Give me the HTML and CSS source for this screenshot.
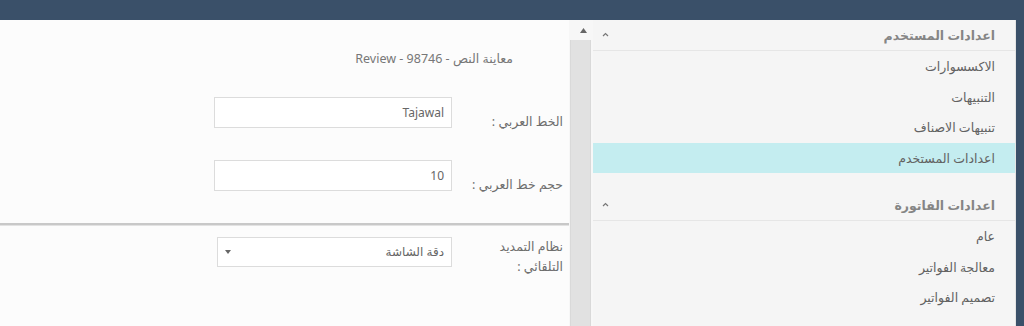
FILE: index.html
```html
<!DOCTYPE html>
<html lang="ar" dir="rtl">
  <head>
    <meta charset="UTF-8" />
    <meta name="viewport" content="width=device-width, initial-scale=1.0" />
    <title>الاعدادات</title>
    <link rel="stylesheet" href="styles.css">
  </head>
  <body>
    <div class="app">
      <aside class="sidebar">
        <div class="group">
          <div class="group-head">
            <span>اعدادات المستخدم</span>
            <svg class="chev" width="7" height="5" viewBox="0 0 7 5"><path d="M1 4 L3.5 1.5 L6 4" fill="none" stroke="#777" stroke-width="1.2"/></svg>
          </div>
          <ul class="menu">
            <li>الاكسسوارات</li>
            <li>التنبيهات</li>
            <li>تنبيهات الاصناف</li>
            <li class="active">اعدادات المستخدم</li>
          </ul>
        </div>
        <div class="group second">
          <div class="group-head">
            <span>اعدادات الفاتورة</span>
            <svg class="chev" width="7" height="5" viewBox="0 0 7 5"><path d="M1 4 L3.5 1.5 L6 4" fill="none" stroke="#777" stroke-width="1.2"/></svg>
          </div>
          <ul class="menu">
            <li>عام</li>
            <li>معالجة الفواتير</li>
            <li>تصميم الفواتير</li>
          </ul>
        </div>
      </aside>

      <div class="scrollbar">
        <div class="scroll-btn">
          <svg width="7" height="5" viewBox="0 0 7 5"><path d="M0 5 L3.5 0 L7 5 Z" fill="#666"/></svg>
        </div>
        <div class="scroll-track"></div>
      </div>

      <main class="panel">
        <p class="preview">معاينة النص - 98746 - Review</p>

        <div class="form-row row-first">
          <label>الخط العربي :</label>
          <div class="field">Tajawal</div>
        </div>

        <div class="form-row row-second">
          <label>حجم خط العربي :</label>
          <div class="field">10</div>
        </div>

        <div class="divider"></div>

        <div class="form-row row-third">
          <label>نظام التمديد التلقائي :</label>
          <div class="field select">
            <span>دقة الشاشة</span>
            <svg class="caret" width="6" height="4" viewBox="0 0 6 4"><path d="M0 0 L6 0 L3 4 Z" fill="#666"/></svg>
          </div>
        </div>
      </main>
    </div>
  </body>
</html>
```

FILE: styles.css
```css
body {
  margin: 0;
  background-color: #3a5069;
  font-family: "Noto Sans", "DejaVu Sans", sans-serif;
  height: 326px;
  overflow: hidden;
}
.app {
  display: flex;
  margin: 20px 8px 0 0;
  height: 306px;
}

/* right menu */
.sidebar {
  width: 422px;
  background-color: #f5f5f5;
  border-right: 1px solid #e4e4e4;
  flex-shrink: 0;
}
.group-head {
  display: flex;
  justify-content: space-between;
  align-items: center;
  height: 30px;
  padding: 0 20px 0 9px;
  border-bottom: 1px solid #e6e6e6;
  color: #858585;
  font-size: 12.5px;
  font-weight: bold;
  letter-spacing: 0.5px;
}
.group-head .chev {
  margin-top: -2px;
}
.group.second {
  margin-top: 17px;
}
.menu {
  list-style: none;
  margin: 0;
  padding: 0;
}
.menu li {
  height: 30.5px;
  line-height: 31px;
  padding-right: 20px;
  color: #626262;
  font-size: 12.5px;
}
.menu li.active {
  background-color: #c4edf0;
}

/* fake scrollbar between panes */
.scrollbar {
  width: 24px;
  display: flex;
  flex-direction: column;
  flex-shrink: 0;
  background-color: #f7f7f7;
}
.scroll-btn {
  height: 20px;
  display: flex;
  align-items: center;
  justify-content: center;
  padding-left: 4px;
}
.scroll-track {
  flex-grow: 1;
  margin: 0 2px 0 1px;
  background-color: #e1e1e1;
  border-left: 1px solid #d9d9d9;
  border-right: 1px solid #d9d9d9;
}

/* left form panel */
.panel {
  width: 569px;
  background-color: #fcfcfc;
  flex-shrink: 0;
}
.preview {
  margin: 29px 56px 0 0;
  line-height: 20px;
  font-size: 12.5px;
  color: #777;
}
.form-row {
  display: flex;
  gap: 16px;
  padding-right: 6px;
}
.form-row label {
  width: 95px;
  line-height: 20px;
  font-size: 12.5px;
  color: #6e6e6e;
}
.row-first {
  margin-top: 28px;
}
.row-first label,
.row-second label {
  padding-top: 15px;
}
.row-second {
  margin-top: 28px;
}
.row-third {
  margin-top: 11px;
}
.field {
  box-sizing: border-box;
  width: 238px;
  height: 31px;
  padding: 0 7px;
  background-color: white;
  border: 1px solid #dcdcdc;
  line-height: 29px;
  font-size: 12px;
  color: #666;
}
.field.select {
  width: 235px;
  height: 30px;
  line-height: 28px;
  display: flex;
  justify-content: space-between;
  align-items: center;
}
.divider {
  margin-top: 28px;
  height: 2px;
  background-color: #c8c8c8;
  border-bottom: 1px solid #e2e2e2;
}
```
